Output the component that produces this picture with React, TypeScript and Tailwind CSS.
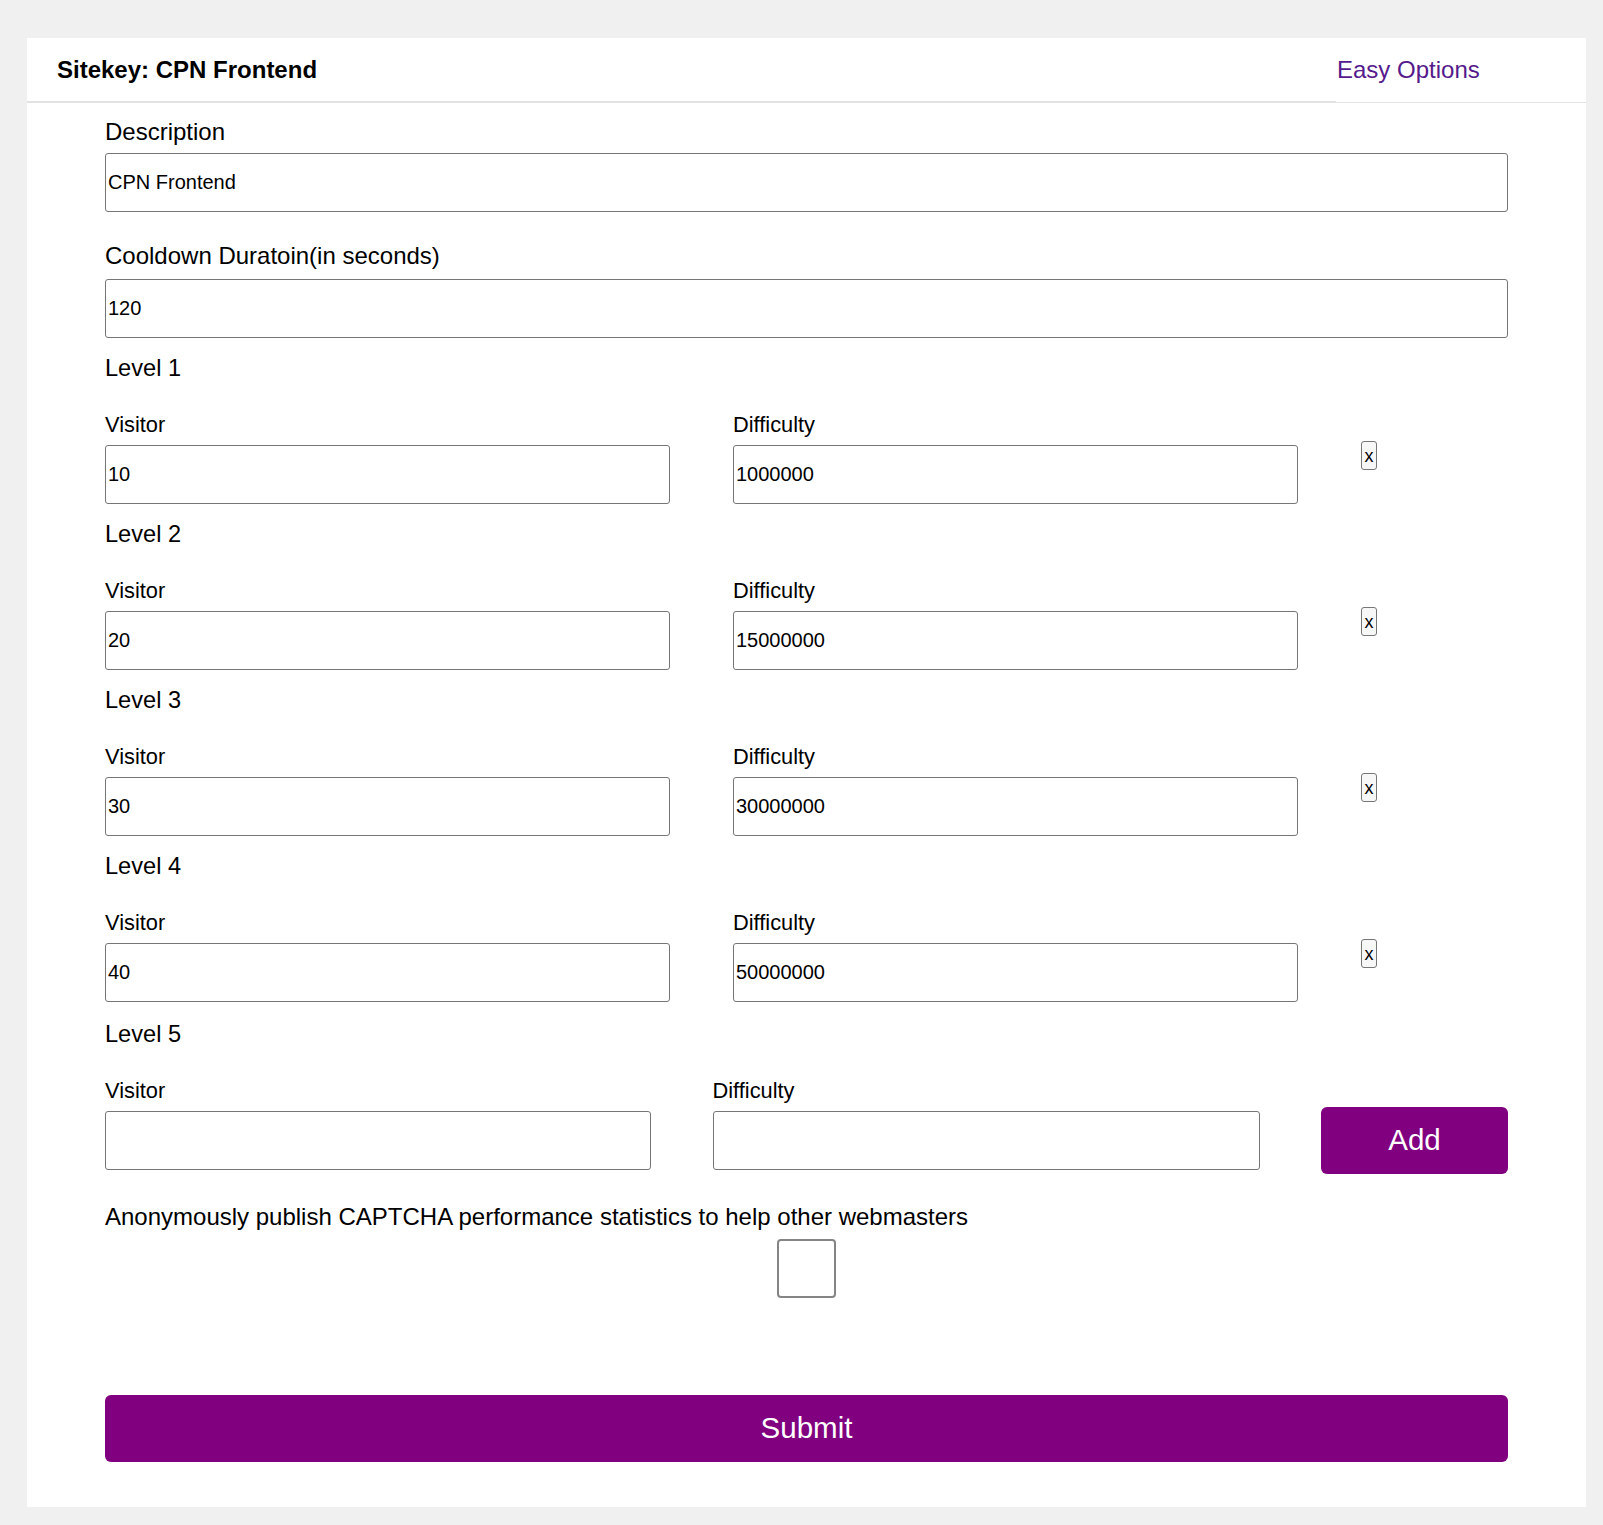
import React from "react";

const levels = [
  { visitor: "10", difficulty: "1000000" },
  { visitor: "20", difficulty: "15000000" },
  { visitor: "30", difficulty: "30000000" },
  { visitor: "40", difficulty: "50000000" },
];

const inputCls =
  "block w-full h-[59px] border border-[#767676] rounded-[3px] px-[2px] text-[20px] text-black bg-white outline-none";

function App() {
  return (
    <div className="min-h-screen bg-[#f0f0f0] pt-[38px] pb-[18px] font-['Liberation_Sans',Arial,sans-serif] text-black">
      <div className="ml-[27px] w-[1559px] bg-white">
        {/* Header */}
        <header className="flex h-[65px]">
          <div className="flex flex-1 items-center pl-[30px] border-b-2 border-[#e2e2e2]">
            <h1 className="text-[24px] font-bold">Sitekey: CPN Frontend</h1>
          </div>
          <div className="flex w-[250px] items-center pl-[1px] border-b border-[#e2e2e2]">
            <a href="#" className="text-[24px] text-[#551a8b]">
              Easy Options
            </a>
          </div>
        </header>

        {/* Form */}
        <form className="px-[78px] pt-[15px] pb-[45px]" onSubmit={(e) => e.preventDefault()}>
          <label className="block text-[24px] leading-[28px]">Description</label>
          <input className={`${inputCls} mt-[7px]`} defaultValue="CPN Frontend" />

          <label className="block mt-[30px] text-[24px] leading-[28px]">Cooldown Duratoin(in seconds)</label>
          <input className={`${inputCls} mt-[9px]`} defaultValue="120" />

          {levels.map((lvl, i) => (
            <div key={i} className="mt-[16px]">
              <div className="text-[23.6px] leading-[28px]">Level {i + 1}</div>
              <div className="flex items-start gap-[63px] mt-[30px]">
                <div className="w-[565px]">
                  <label className="block text-[21.8px] leading-[25px]">Visitor</label>
                  <input className={`${inputCls} mt-[8px]`} defaultValue={lvl.visitor} />
                </div>
                <div className="w-[565px]">
                  <label className="block text-[21.8px] leading-[25px]">Difficulty</label>
                  <input className={`${inputCls} mt-[8px]`} defaultValue={lvl.difficulty} />
                </div>
                <button
                  type="button"
                  className="mt-[29px] flex h-[29px] w-[16px] items-center justify-center rounded-[3px] border border-[#767676] bg-[#f7f7f7] text-[18px] leading-none"
                >
                  x
                </button>
              </div>
            </div>
          ))}

          {/* New level */}
          <div className="mt-[18px]">
            <div className="text-[23.6px] leading-[28px]">Level 5</div>
            <div className="flex items-start gap-[61.5px] mt-[30px]">
              <div className="w-[546px]">
                <label className="block text-[21.8px] leading-[25px]">Visitor</label>
                <input className={`${inputCls} mt-[8px]`} />
              </div>
              <div className="w-[547px]">
                <label className="block text-[21.8px] leading-[25px]">Difficulty</label>
                <input className={`${inputCls} mt-[8px]`} />
              </div>
              <button
                type="button"
                className="mt-[29px] h-[67px] w-[187px] rounded-[6px] bg-[#800080] text-[29.5px] text-white"
              >
                Add
              </button>
            </div>
          </div>

          <label className="block mt-[29px] text-[24px] leading-[28px]">
            Anonymously publish CAPTCHA performance statistics to help other webmasters
          </label>
          <input
            type="checkbox"
            className="mx-auto mt-[8px] block h-[59px] w-[59px] appearance-none rounded-[4px] border-2 border-[#858585] bg-white"
          />

          <button
            type="submit"
            className="mt-[97px] block h-[67px] w-full rounded-[6px] bg-[#800080] text-[29.5px] text-white"
          >
            Submit
          </button>
        </form>
      </div>
    </div>
  );
}

export default App;
